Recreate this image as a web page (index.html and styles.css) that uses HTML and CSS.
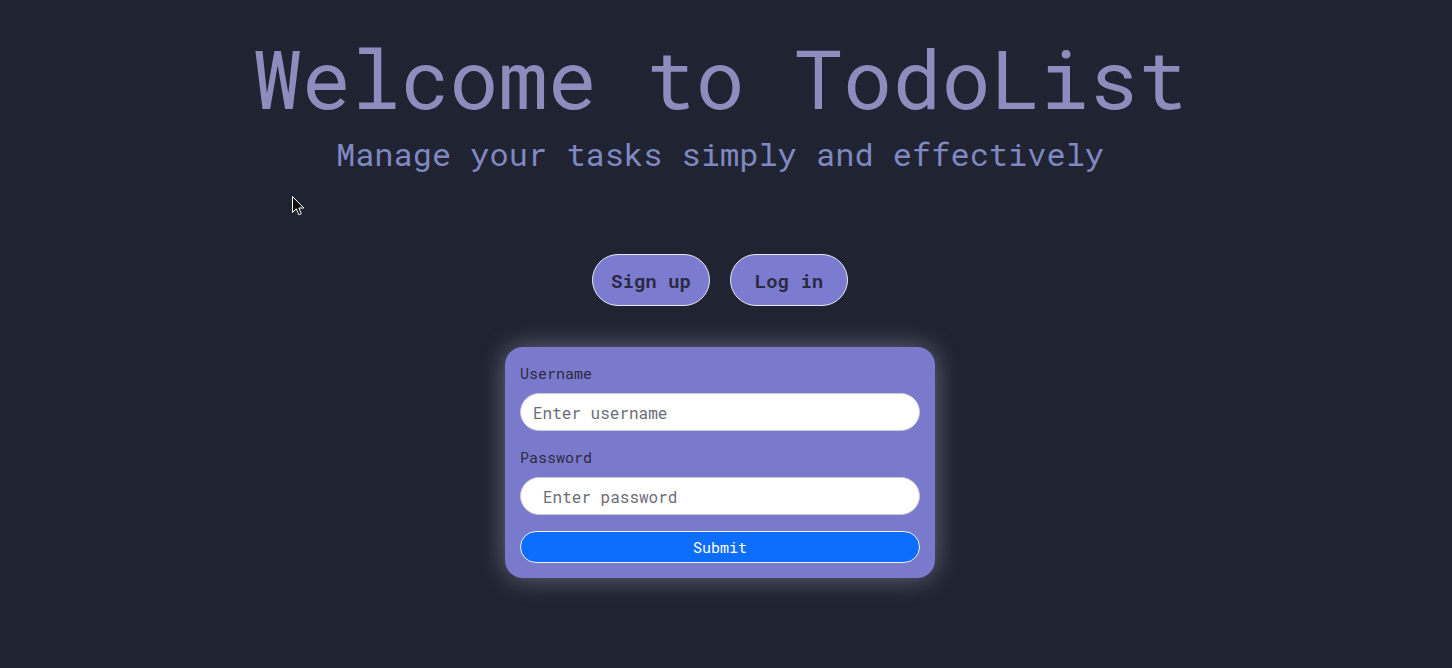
FILE: index.html
```html
<!DOCTYPE html>
<html lang="en">
<head>
<meta charset="utf-8">
<title>TodoList</title>
<link rel="stylesheet" href="styles.css">
</head>
<body>
<main class="page">
  <h1 class="title">Welcome to TodoList</h1>
  <p class="subtitle">Manage your tasks simply and effectively</p>
  <div class="actions">
    <button class="pill" type="button">Sign up</button>
    <button class="pill" type="button">Log in</button>
  </div>
  <form class="card">
    <label class="label" for="username">Username</label>
    <input class="field field-first" id="username" type="text" placeholder="Enter username">
    <label class="label" for="password">Password</label>
    <input class="field field-wide" id="password" type="password" placeholder="Enter password">
    <button class="submit" type="button">Submit</button>
  </form>
</main>
<svg class="cursor" width="13" height="21" viewBox="0 0 13 21" aria-hidden="true">
  <path d="M0.5 0.5 L0.5 16.5 L4.3 12.8 L6.8 18.8 L9.3 17.7 L6.9 12 L11.8 12 Z" fill="#111" stroke="#fff" stroke-width="1" stroke-linejoin="miter"/>
</svg>
</body>
</html>
```
FILE: styles.css
```css
html, body {
  margin: 0;
  padding: 0;
  background: #1f2332;
  height: 100%;
}
body {
  font-family: "Roboto Mono", "DejaVu Sans Mono", "Liberation Mono", monospace;
  position: relative;
}
.page {
  display: flex;
  flex-direction: column;
  align-items: center;
  padding-top: 36px;
  padding-right: 12px;
}
.title {
  margin: 0;
  font-size: 82px;
  line-height: 82px;
  font-weight: normal;
  color: #8e8cbd;
}
.subtitle {
  margin: 20px 0 0;
  font-size: 32px;
  line-height: 32px;
  color: #7f88c0;
}
.actions {
  display: flex;
  gap: 20px;
  margin-top: 84px;
}
.pill {
  width: 118px;
  height: 52px;
  border-radius: 26px;
  border: 1px solid #e8e8f0;
  background: #7b7bcf;
  color: #2b2a44;
  font-family: inherit;
  font-weight: bold;
  font-size: 19px;
  padding: 0;
}
.card {
  margin-top: 41px;
  width: 400px;
  padding: 15px;
  background: #7a7acd;
  border-radius: 18px;
  box-shadow: 0 0 26px rgba(210, 210, 230, 0.4);
  display: flex;
  flex-direction: column;
}
.label {
  font-size: 15px;
  line-height: 20px;
  padding-top: 1px;
  color: #2b2a40;
  margin-bottom: 10px;
}
.field {
  box-sizing: border-box;
  height: 38px;
  width: 100%;
  border-radius: 19px;
  border: 1px solid #c9c9d4;
  background: #fff;
  font-family: inherit;
  font-size: 16px;
  padding: 0 12px;
  margin-bottom: 16px;
  color: #333;
}
.field-first {
  margin-bottom: 15px;
}
.field::placeholder {
  color: #6c6c78;
}
.field-wide {
  padding-left: 22px;
}
.submit {
  height: 32px;
  width: 100%;
  border-radius: 16px;
  border: 1px solid #f0f0ff;
  background: #0d6efd;
  color: #fff;
  font-family: inherit;
  font-size: 15px;
  padding: 0;
}
.cursor {
  position: absolute;
  left: 292px;
  top: 196px;
}
```
